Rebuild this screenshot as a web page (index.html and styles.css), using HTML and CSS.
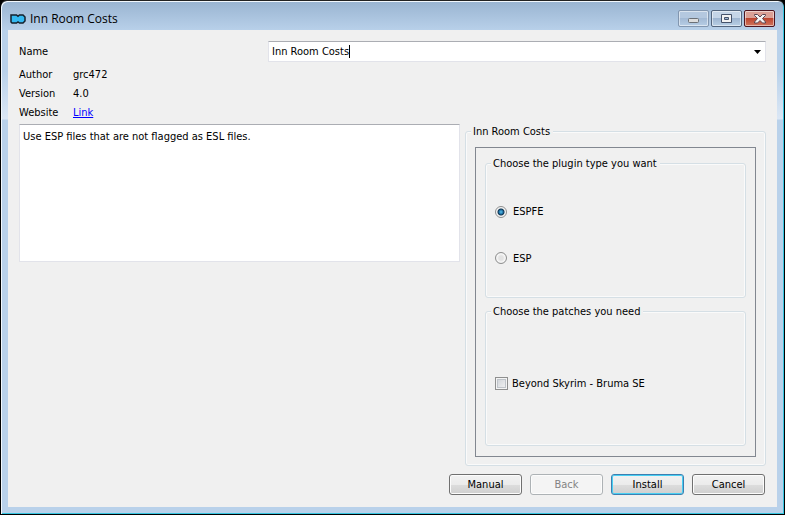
FILE: index.html
```html
<!DOCTYPE html>
<html lang="en">
<head>
<meta charset="utf-8">
<title>Inn Room Costs</title>
<link rel="stylesheet" href="styles.css">
</head>
<body>
<div class="window">
  <header class="titlebar">
    <svg class="app-icon" width="16" height="10" viewBox="0 0 16 10" aria-hidden="true"><path d="M1 1H6.500L8 2.300L9.500 1H13L15 3V7L13 9H9.500L8 8L6.500 9H2L1 8Z" fill="#35b9f1" stroke="#15212c" stroke-width="1.500"/></svg>
    <h1 class="title">Inn Room Costs</h1>
    <div class="controls">
      <button class="control minimize" aria-label="Minimize"><svg width="11" height="5" viewBox="0 0 11 5"><rect x=".5" y=".5" width="10" height="4" rx="1" fill="#ddd" stroke="#6b7076"/></svg></button>
      <button class="control" aria-label="Maximize"><svg width="11" height="9" viewBox="0 0 11 9"><path d="M.5 .5H10.500V8.500H.5Z M3.500 3.500V5.500H7.500V3.500Z" fill="#f2f2f2" fill-rule="evenodd" stroke="#45526a"/></svg></button>
      <button class="control close" aria-label="Close"><svg width="12" height="10" viewBox="0 0 12 10"><path d="M.5 .5H3.500L6 3L8.500 .5H11.500V1.500L8.500 4.500L11.500 8V9H8.500L6 6.500L3.500 9H.5V8L3.500 4.500L.5 1.500Z" fill="#f4f4f4" stroke="#5a4652"/></svg></button>
    </div>
  </header>
  <main class="client">
    <div class="name-row">
      <label for="name">Name</label>
      <div class="combo">
        <input id="name" class="combo-input" type="text" value="Inn Room Costs"><span class="caret"></span>
        <button class="combo-arrow" aria-label="Show names"><svg width="7" height="4" viewBox="0 0 7 4"><path d="M0 0H7L3.500 4Z"/></svg></button>
      </div>
    </div>
    <dl class="info">
      <dt>Author</dt><dd>grc472</dd>
      <dt>Version</dt><dd>4.0</dd>
      <dt>Website</dt><dd><a href="#">Link</a></dd>
    </dl>
    <div class="columns">
      <textarea class="description" aria-label="Description" readonly>Use ESP files that are not flagged as ESL files.</textarea>
      <fieldset class="group step">
        <legend>Inn Room Costs</legend>
        <div class="frame">
          <fieldset class="group options">
            <legend>Choose the plugin type you want</legend>
            <label class="option"><input type="radio" name="plugin" checked>ESPFE</label>
            <label class="option"><input type="radio" name="plugin">ESP</label>
          </fieldset>
          <fieldset class="group options">
            <legend>Choose the patches you need</legend>
            <label class="option"><input type="checkbox">Beyond Skyrim - Bruma SE</label>
          </fieldset>
        </div>
      </fieldset>
    </div>
    <footer class="actions">
      <button class="button">Manual</button>
      <button class="button" disabled>Back</button>
      <button class="button default">Install</button>
      <button class="button">Cancel</button>
    </footer>
  </main>
</div>
</body>
</html>
```
FILE: styles.css
```css
* { box-sizing: border-box; }
body {
  margin: 0;
  background: #000;
  color: #000;
  font: 11px/15px Tahoma, "DejaVu Sans Condensed", "Liberation Sans", sans-serif;
}
input, button, textarea { font: inherit; color: inherit; }
.window {
  display: flex;
  flex-direction: column;
  height: 100vh;
  padding: 1px 7px 7px;
  border: 1px solid #000;
  border-top-color: #222;
  border-radius: 7px 7px 0 0;
  background: linear-gradient(#99b4d1 0, #b9d1ea 30px, #b9d1ea 70px, #dbe7f5 118px, #b9d1ea 119px);
  box-shadow: inset 1px 1px #f2f8fd, inset -1px -1px #35c5e0;
}
.titlebar { display: flex; align-items: center; height: 28px; padding: 5px 2px 0; }
.title { flex: 1; margin: 0 0 0 4px; font: 12px/16px "Segoe UI", "Open Sans", sans-serif; }
.controls { display: flex; align-items: center; gap: 2px; }
.control {
  display: flex;
  align-items: center;
  justify-content: center;
  width: 31px;
  height: 17px;
  padding: 0;
  border: 1px solid #53657d;
  border-radius: 2px;
  background: linear-gradient(#c5d5e7 50%, #9fb6d1 50%, #b8cfe5);
  box-shadow: inset 0 0 0 1px #ffffff80;
}
.minimize { border-color: #8296af; background: linear-gradient(#b4c8df 50%, #a3bad5 50%, #b7cde5); }
.minimize svg { margin-top: 4px; }
.close { border-color: #4c1520; background: linear-gradient(#dba095 45%, #bd452f 50%, #d0765f); }
.client { display: flex; flex: 1; flex-direction: column; min-height: 0; padding: 11px 11px 12px; background: #f0f0f0; }
.name-row { display: grid; grid-template-columns: 1fr 2fr; align-items: center; }
.combo { display: flex; align-items: center; height: 21px; padding-left: 3px; border: 1px solid #e2e3ea; border-top-color: #abadb3; background: #fff; }
.combo-input { padding: 0; border: 0; outline: 0; background: none; field-sizing: content; caret-color: transparent; }
.caret { width: 1px; height: 13px; background: #000; }
.combo-arrow { display: flex; margin-left: auto; padding: 4px; border: 0; background: none; }
.info { display: grid; grid-template-columns: 54px 1fr; row-gap: 4px; margin: 5px 0 4px; }
.info dd { margin: 0; }
.info a { color: #00f; }
.columns { display: grid; flex: 1; grid-template-columns: 441fr 301fr; gap: 5px; min-height: 0; }
.description { height: 138px; padding: 4px 3px; border: 1px solid #e2e3ea; border-top-color: #abadb3; outline: 0; background: #fff; resize: none; }
.group { min-width: 0; margin: 0; padding: 0 9px 8px; border: 1px solid #d5dfe5; border-radius: 3px; box-shadow: inset 0 0 0 1px #fafafa; }
.group legend { margin-left: -4px; padding: 0 3px 0 2px; background: #f0f0f0; }
.step { display: flex; flex-direction: column; padding-top: 8px; }
.frame { display: grid; flex: 1; grid-template-rows: 1fr 1fr; gap: 6px; padding: 8px 9px 10px; border: 1px solid #828790; }
.options { display: flex; flex-direction: column; justify-content: space-evenly; padding: 2px 9px 0; }
.option { display: flex; align-items: center; }
.option input { flex: none; width: 12px; height: 12px; margin: 0 6px 0 0; border: 1px solid #8e8f8f; appearance: none; }
.option input[type="radio"] { border-radius: 50%; background: radial-gradient(#e2e2e2 30%, #f8f8f8 60%, #c6c6c6); }
.option input[type="radio"]:checked { background: radial-gradient(circle at 50% 50%, #5cc5ef 0, #1d70a5 2px, #12344f 3px, #f4f4f4 4px); }
.option input[type="checkbox"] { width: 13px; height: 13px; margin-right: 4px; background: linear-gradient(135deg, #cbcfd5, #f6f6f6); box-shadow: inset 0 0 0 1px #f4f4f4, inset 0 0 0 2px #bfc4ca; }
.actions { display: flex; justify-content: flex-end; gap: 8px; margin-top: 8px; padding-right: 1px; }
.button { width: 73px; height: 21px; padding: 0; border: 1px solid #707070; border-radius: 3px; background: linear-gradient(#f2f2f2, #ebebeb 50%, #ddd 50%, #cfcfcf); box-shadow: inset 0 0 0 1px #fcfcfc; }
.button:disabled { border-color: #adb2b5; background: #f4f4f4; color: #838383; }
.default { border-color: #3c7fb1; box-shadow: inset 0 0 0 1px #48cff3; }
```
